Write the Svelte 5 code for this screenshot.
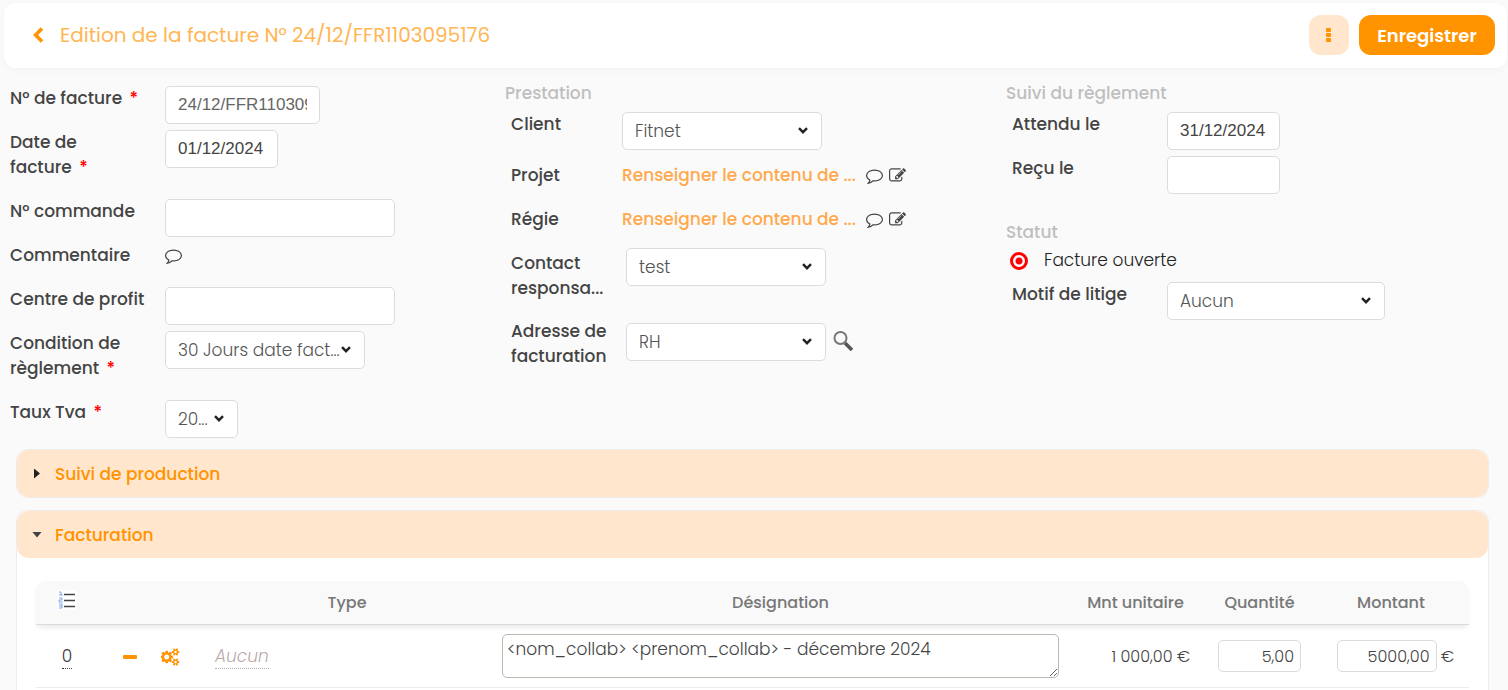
<script lang="ts">
  let numero = $state("24/12/FFR1103095176");
  let dateFacture = $state("01/12/2024");
  let commande = $state("");
  let centreProfit = $state("");
  let attendu = $state("31/12/2024");
  let recu = $state("");
  let statut = $state("ouverte");
  let productionOpen = $state(false);
  let facturationOpen = $state(true);

  let lignes = $state([
    {
      ordre: 0,
      type: "Aucun",
      designation: "<nom_collab> <prenom_collab> - décembre 2024",
      unitaire: "1 000,00",
      quantite: "5,00",
      montant: "5000,00",
    },
  ]);
</script>

{#snippet commentIcon()}
  <svg class="icon" viewBox="0 0 1792 1792" aria-hidden="true">
    <path d="M896 384q-204 0-381.5 69.5t-282 187.5-104.5 255q0 112 71.5 213.5t201.5 175.5l87 50-27 96q-24 91-70 172 152-63 275-171l43-38 57 6q69 8 130 8 204 0 381.5-69.5t282-187.5 104.5-255-104.5-255-282-187.5-381.5-69.5zm896 512q0 174-120 321.5t-326 233-450 85.5q-70 0-145-8-198 175-460 242-49 14-114 22h-5q-15 0-27-10.5t-16-27.5v-1q-3-4-.5-12t2-10 4.5-9.5l6-9 7-8.5 8-9q7-8 31-34.5t34.5-38 31-39.5 32.5-51 27-59 26-76q-157-89-247.5-220t-90.5-281q0-130 71-248.5t191-204.5 286-136.5 348-50.5 348 50.5 286 136.5 191 204.5 71 248.5z" />
  </svg>
{/snippet}

{#snippet editIcon()}
  <svg class="icon" viewBox="0 0 1792 1792" aria-hidden="true">
    <path d="M888 1184l116-116-152-152-116 116v56h96v96h56zm440-720q-16-16-33 1l-350 350q-17 17-1 33t33-1l350-350q17-17 1-33zm80 594v190q0 119-84.5 203.5t-203.5 84.5h-832q-119 0-203.5-84.5t-84.5-203.5v-832q0-119 84.5-203.5t203.5-84.5h832q63 0 117 25 15 7 18 23 3 17-9 29l-49 49q-14 14-32 8-23-6-45-6h-832q-66 0-113 47t-47 113v832q0 66 47 113t113 47h832q66 0 113-47t47-113v-126q0-13 9-22l64-64q15-15 35-7t20 29zm-96-738l288 288-672 672h-288v-288zm444 132l-92 92-288-288 92-92q28-28 68-28t68 28l152 152q28 28 28 68t-28 68z" />
  </svg>
{/snippet}

{#snippet picker(id: string, value: string, size: string)}
  <span class="picker {size}">
    <select {id}>
      <option>{value}</option>
    </select>
    <svg viewBox="0 0 10 7" aria-hidden="true"><path d="M1 1.2l4 4 4-4" /></svg>
  </span>
{/snippet}

{#snippet star()}<span class="star">*</span>{/snippet}

<div class="page">
  <header>
    <a class="back" href="#factures" aria-label="Retour">
      <svg viewBox="0 0 11 16" aria-hidden="true"><path d="M9 1.6L2.6 8 9 14.4" /></svg>
    </a>
    <h1>Edition de la facture N° 24/12/FFR1103095176</h1>
    <button class="more" aria-label="Plus d'actions">
      <svg viewBox="0 0 6 15" aria-hidden="true">
        <rect x="0" y="0" width="5" height="4" rx="1" />
        <rect x="0" y="5" width="5" height="4" rx="1" />
        <rect x="0" y="10" width="5" height="4" rx="1" />
      </svg>
    </button>
    <button class="save">Enregistrer</button>
  </header>

  <form class="form">
    <section class="col general">
      <div class="row">
        <label for="numero">N° de facture {@render star()}</label>
        <input id="numero" class="medium muted" bind:value={numero} />
      </div>
      <div class="row">
        <label for="date">Date de<br />facture {@render star()}</label>
        <input id="date" class="date" bind:value={dateFacture} />
      </div>
      <div class="row">
        <label for="commande">N° commande</label>
        <input id="commande" class="wide" bind:value={commande} />
      </div>
      <div class="row">
        <span class="label">Commentaire</span>
        <button type="button" class="icon-btn" aria-label="Commentaire">{@render commentIcon()}</button>
      </div>
      <div class="row">
        <label for="centre">Centre de profit</label>
        <input id="centre" class="wide" bind:value={centreProfit} />
      </div>
      <div class="row">
        <label for="condition">Condition de<br />règlement {@render star()}</label>
        {@render picker("condition", "30 Jours date fact...", "normal")}
      </div>
      <div class="row">
        <label for="tva">Taux Tva {@render star()}</label>
        {@render picker("tva", "20...", "tiny")}
      </div>
    </section>

    <section class="col prestation">
      <h2>Prestation</h2>
      <div class="row client">
        <label for="client">Client</label>
        {@render picker("client", "Fitnet", "normal")}
      </div>
      {#each ["Projet", "Régie"] as nom}
        <div class="row lien">
          <span class="label">{nom}</span>
          <a class="fill" href="#contenu">Renseigner le contenu de ...</a>
          <button type="button" class="icon-btn" aria-label="Commenter">{@render commentIcon()}</button>
          <button type="button" class="icon-btn" aria-label="Modifier">{@render editIcon()}</button>
        </div>
      {/each}
      <div class="row contact">
        <label for="contact">Contact<br />responsa...</label>
        {@render picker("contact", "test", "normal")}
      </div>
      <div class="row adresse">
        <label for="adresse">Adresse de<br />facturation</label>
        {@render picker("adresse", "RH", "normal")}
        <button type="button" class="search" aria-label="Rechercher une adresse">
          <svg viewBox="0 0 20 20" aria-hidden="true">
            <path class="handle" d="M12 12l7 7" />
            <circle cx="7.5" cy="7" r="6" />
          </svg>
        </button>
      </div>
    </section>

    <section class="col reglement">
      <h2>Suivi du règlement</h2>
      <div class="row">
        <label for="attendu">Attendu le</label>
        <input id="attendu" class="date" bind:value={attendu} />
      </div>
      <div class="row">
        <label for="recu">Reçu le</label>
        <input id="recu" class="date" bind:value={recu} />
      </div>
      <h2 class="statut">Statut</h2>
      <label class="radio">
        <input type="radio" name="statut" value="ouverte" bind:group={statut} />
        Facture ouverte
      </label>
      <div class="row">
        <label for="litige">Motif de litige</label>
        {@render picker("litige", "Aucun", "large")}
      </div>
    </section>
  </form>

  <section class="panel">
    <button class="bar" aria-expanded={productionOpen} onclick={() => (productionOpen = !productionOpen)}>
      <span class="caret" class:open={productionOpen}></span>Suivi de production
    </button>
  </section>

  <section class="panel" class:expanded={facturationOpen}>
    <button class="bar" aria-expanded={facturationOpen} onclick={() => (facturationOpen = !facturationOpen)}>
      <span class="caret" class:open={facturationOpen}></span>Facturation
    </button>
    {#if facturationOpen}
      <table>
        <colgroup>
          <col class="c-ordre" />
          <col class="c-remove" />
          <col class="c-gear" />
          <col class="c-type" />
          <col />
          <col class="c-unit" />
          <col class="c-qty" />
          <col class="c-total" />
        </colgroup>
        <thead>
          <tr>
            <th>
              <svg class="list" viewBox="0 0 20 20" role="img" aria-label="Ordre">
                <rect width="20" height="20" rx="2" fill="#fff" />
                <path class="nums" d="M2 2h2v3M2 5h4M2 8h3v2H2v2h4M2 14h3v4H2M2 16h3" />
                <path class="lines" d="M7 4.5h11M7 10.5h11M7 16.5h11" />
              </svg>
            </th>
            <th></th>
            <th></th>
            <th>Type</th>
            <th>Désignation</th>
            <th>Mnt unitaire</th>
            <th>Quantité</th>
            <th>Montant</th>
          </tr>
        </thead>
        <tbody>
          {#each lignes as ligne}
            <tr>
              <td class="center"><a class="ordre" href="#ordre">{ligne.ordre}</a></td>
              <td class="center">
                <button class="act" aria-label="Supprimer la ligne">
                  <svg class="minus" viewBox="0 0 14 4" aria-hidden="true"><rect width="14" height="4" rx="1" /></svg>
                </button>
              </td>
              <td>
                <button class="act" aria-label="Options de la ligne">
                  <svg class="cogs" viewBox="0 0 1920 1792" aria-hidden="true">
                    <path d="M832 896q0-106-75-181t-181-75-181 75-75 181 75 181 181 75 181-75 75-181zm768 512q0-52-38-90t-90-38-90 38-38 90q0 53 37.5 90.5t90.5 37.5 90.5-37.5 37.5-90.5zm0-1024q0-52-38-90t-90-38-90 38-38 90q0 53 37.5 90.5t90.5 37.5 90.5-37.5 37.5-90.5zm-384 421v185q0 10-7 19.5t-16 10.5l-155 24q-11 35-32 76 34 48 90 115 7 11 7 20 0 12-7 19-23 30-82.5 89.5t-78.5 59.5q-11 0-21-7l-115-90q-37 19-77 31-11 108-23 155-7 24-30 24h-186q-11 0-20-7.5t-10-17.5l-23-153q-34-10-75-31l-118 89q-7 7-20 7-11 0-21-8-144-133-144-160 0-9 7-19 10-14 41-53t47-61q-23-44-35-82l-152-24q-10-1-17-9.5t-7-19.5v-185q0-10 7-19.5t16-10.5l155-24q11-35 32-76-34-48-90-115-7-11-7-20 0-12 7-20 22-30 82-89t79-59q11 0 21 7l115 90q34-18 77-32 11-108 23-154 7-24 30-24h186q11 0 20 7.5t10 17.5l23 153q34 10 75 31l118-89q8-7 20-7 11 0 21 8 144 133 144 160 0 8-7 19-12 16-42 54t-45 60q23 48 34 82l152 23q10 2 17 10.5t7 19.5zm640 533v140q0 16-149 31-12 27-30 52 51 113 51 138 0 4-4 7-122 71-124 71-8 0-46-47t-52-68q-20 2-30 2t-30-2q-14 21-52 68t-46 47q-2 0-124-71-4-3-4-7 0-25 51-138-18-25-30-52-149-15-149-31v-140q0-16 149-31 13-29 30-52-51-113-51-138 0-4 4-7 4-2 35-20t59-34 30-16q8 0 46 46.5t52 67.5q20-2 30-2t30 2q51-71 92-112l6-2q4 0 124 70 4 3 4 7 0 25-51 138 17 23 30 52 149 15 149 31zm0-1024v140q0 16-149 31-12 27-30 52 51 113 51 138 0 4-4 7-122 71-124 71-8 0-46-47t-52-68q-20 2-30 2t-30-2q-14 21-52 68t-46 47q-2 0-124-71-4-3-4-7 0-25 51-138-18-25-30-52-149-15-149-31v-140q0-16 149-31 13-29 30-52-51-113-51-138 0-4 4-7 4-2 35-20t59-34 30-16q8 0 46 46.5t52 67.5q20-2 30-2t30 2q51-71 92-112l6-2q4 0 124 70 4 3 4 7 0 25-51 138 17 23 30 52 149 15 149 31z" />
                  </svg>
                </button>
              </td>
              <td class="type"><a href="#type">{ligne.type}</a></td>
              <td><textarea aria-label="Désignation" bind:value={ligne.designation}></textarea></td>
              <td class="unit">{ligne.unitaire} €</td>
              <td class="center"><input class="qty" aria-label="Quantité" bind:value={ligne.quantite} /></td>
              <td class="total"><input class="amount" aria-label="Montant" bind:value={ligne.montant} /> €</td>
            </tr>
          {/each}
        </tbody>
      </table>
    {/if}
  </section>
</div>

<style>
  :global(body) {
    background: #fafafa;
  }
  .page {
    --sans: Poppins, Inter, sans-serif;
    --orange: #ff9300;
    --peach: #ffe6cc;
    --line: #dcdcdc;
    box-sizing: border-box;
    min-height: 100vh;
    display: flex;
    flex-direction: column;
    padding-top: 3px;
    font-family: var(--sans);
    font-size: 17px;
    line-height: 25px;
    color: #444;
  }
  .page * {
    box-sizing: border-box;
  }
  button {
    border: none;
    background: none;
    padding: 0;
    font-family: inherit;
    cursor: pointer;
  }
  a {
    text-decoration: none;
  }

  header {
    display: flex;
    align-items: center;
    margin: 0 1px 0 4px;
    padding: 12px 12px 13px 29px;
    background: #fff;
    border-radius: 12px;
    box-shadow: 0 2px 8px rgba(0, 0, 0, 0.03);
  }
  .back {
    display: flex;
    margin-right: 16px;
  }
  .back svg {
    width: 11px;
    height: 16px;
    fill: none;
    stroke: var(--orange);
    stroke-width: 3.6;
  }
  h1 {
    flex: 1;
    margin: 0;
    font-size: 20px;
    font-weight: 400;
    color: #ffb654;
  }
  .more {
    display: grid;
    place-items: center;
    width: 40px;
    height: 40px;
    margin-right: 10px;
    border-radius: 12px;
    background: var(--peach);
  }
  .more svg {
    width: 6px;
    height: 15px;
    fill: var(--orange);
  }
  .save {
    width: 136px;
    height: 40px;
    border-radius: 12px;
    background: var(--orange);
    color: #fff;
    font-size: 18px;
    font-weight: 600;
  }

  .form {
    display: grid;
    grid-template-columns: repeat(3, 1fr);
    margin: 0 1px 0 4px;
    padding-top: 13px;
  }
  .general {
    padding: 5px 0 5px 6px;
  }
  h2 {
    margin: 0 0 6px;
    font-size: 17px;
    line-height: 25px;
    font-weight: 500;
    color: #bfbfbf;
  }
  .row {
    display: flex;
    align-items: flex-start;
    min-height: 44px;
  }
  .prestation .row,
  .reglement .row {
    padding-left: 6px;
  }
  .row label,
  .label {
    width: 155px;
    flex-shrink: 0;
    padding-bottom: 19px;
    font-weight: 500;
  }
  .prestation label,
  .prestation .label {
    width: 111px;
  }
  .star {
    margin-left: 3px;
    color: #f00;
  }
  input,
  select {
    height: 38px;
    padding: 0 12px;
    border: 1px solid var(--line);
    border-radius: 5px;
    background: #fff;
    color: #444;
    font-family: "Liberation Sans", Arial, sans-serif;
    font-size: 17px;
  }
  .muted {
    color: #666;
  }
  .medium {
    width: 155px;
  }
  .date {
    width: 113px;
  }
  .wide {
    width: 230px;
  }
  .picker {
    position: relative;
    display: block;
  }
  .picker select {
    width: 100%;
    padding-right: 20px;
    appearance: none;
    font-family: var(--sans);
    font-weight: 300;
    color: #555;
  }
  .picker svg {
    position: absolute;
    right: 14px;
    top: 15px;
    width: 10px;
    height: 7px;
    fill: none;
    stroke: #222;
    stroke-width: 2.4;
    pointer-events: none;
  }
  .normal {
    width: 200px;
  }
  .tiny {
    width: 73px;
  }
  .large {
    width: 218px;
  }
  .icon-btn {
    display: flex;
    align-items: center;
    height: 25px;
    margin-right: 6px;
  }
  .icon {
    width: 17px;
    height: 17px;
    fill: #444;
  }
  .client {
    min-height: 51px;
  }
  .lien + .lien {
    min-height: 41px;
  }
  .lien .label {
    padding-bottom: 16px;
  }
  .fill {
    width: 244px;
    color: #ffa94d;
    font-weight: 500;
  }
  .contact label {
    padding-top: 3px;
    padding-bottom: 18px;
  }
  .contact .picker,
  .adresse .picker {
    margin-left: 4px;
  }
  .adresse .picker {
    margin-top: 4px;
  }
  .search {
    display: flex;
    margin: 12px 0 0 7px;
  }
  .search svg {
    width: 20px;
    height: 20px;
    fill: none;
    stroke: #777;
    stroke-width: 2;
  }
  .search .handle {
    stroke: #555;
    stroke-width: 3.6;
  }
  .statut {
    margin: 20px 0 3px;
  }
  .radio {
    display: flex;
    align-items: center;
    gap: 16px;
    padding-left: 4px;
    margin-bottom: 9px;
    color: #222;
    font-weight: 300;
  }
  .radio input {
    appearance: none;
    width: 18px;
    height: 18px;
    margin: 0;
    padding: 0;
    border: 3px solid #f00;
    border-radius: 50%;
  }
  .radio input:checked {
    background: radial-gradient(circle, #f00 3px, #fff 4px);
  }

  .panel {
    margin: 0 19px 12px 16px;
    border: 1px solid #ececec;
    border-radius: 12px;
    background: #fff;
  }
  .panel.expanded {
    flex: 1;
    margin-bottom: 0;
    border-bottom: none;
    border-radius: 12px 12px 0 0;
  }
  .bar {
    display: flex;
    align-items: center;
    width: 100%;
    height: 47px;
    padding-left: 16px;
    border-radius: 12px;
    background: var(--peach);
    color: var(--orange);
    font-size: 17px;
    font-weight: 500;
  }
  .caret {
    width: 6px;
    height: 10px;
    margin: 0 15px 0 1px;
    background: #222;
    clip-path: polygon(0 0, 100% 50%, 0 100%);
  }
  .caret.open {
    width: 10px;
    height: 6px;
    margin: 0 13px 0 -1px;
    background: #444;
    clip-path: polygon(0 0, 100% 0, 50% 100%);
  }

  table {
    width: calc(100% - 38px);
    margin: 23px 19px 0;
    table-layout: fixed;
    border-collapse: separate;
    border-spacing: 0;
    font-size: 16px;
  }
  thead {
    box-shadow: 0 4px 6px -2px rgba(0, 0, 0, 0.1);
  }
  .c-ordre {
    width: 62px;
  }
  .c-remove {
    width: 63px;
  }
  .c-gear {
    width: 31px;
  }
  .c-type {
    width: 310px;
  }
  .c-unit {
    width: 153px;
  }
  .c-qty {
    width: 95px;
  }
  .c-total {
    width: 162px;
  }
  th {
    height: 44px;
    padding: 0;
    border-bottom: 1px solid #dadada;
    background: #f9f9f9;
    color: #777;
    font-weight: 500;
  }
  th:first-child {
    border-top-left-radius: 10px;
  }
  th:last-child {
    border-top-right-radius: 10px;
    padding-left: 6px;
  }
  .list {
    display: block;
    width: 20px;
    height: 20px;
    margin: 0 auto 6px;
    fill: none;
  }
  .nums {
    stroke: #7fa9e6;
  }
  .lines {
    stroke: #444;
    stroke-width: 1.4;
  }
  td {
    height: 63px;
    padding: 0;
    border-bottom: 1px solid #ececec;
    font-weight: 300;
  }
  .center {
    text-align: center;
  }
  .ordre,
  .type a {
    border-bottom: 1px dotted #444;
    color: #333;
    font-size: 17px;
  }
  .type {
    padding-left: 23px;
  }
  .type a {
    border-color: #baa;
    color: #baa9a9;
    font-style: italic;
  }
  .act {
    display: inline-block;
    vertical-align: middle;
  }
  .act svg {
    display: block;
    fill: var(--orange);
  }
  .minus {
    width: 14px;
    height: 4px;
  }
  .cogs {
    width: 19px;
    height: 18px;
  }
  textarea {
    display: block;
    width: 100%;
    height: 44px;
    padding: 2px 4px;
    border: 1px solid #bbb8b0;
    border-radius: 5px;
    background: #fff;
    color: #444;
    font-family: var(--sans);
    font-size: 17px;
    line-height: 25px;
    font-weight: 300;
  }
  .unit {
    padding-right: 22px;
    text-align: right;
    white-space: nowrap;
  }
  .qty,
  .amount {
    width: 83px;
    height: 32px;
    padding: 0 6px;
    font-family: var(--sans);
    font-size: 16px;
    font-weight: 300;
    text-align: right;
  }
  .amount {
    width: 100px;
  }
  .total {
    padding-right: 15px;
    text-align: right;
    white-space: nowrap;
  }
</style>
